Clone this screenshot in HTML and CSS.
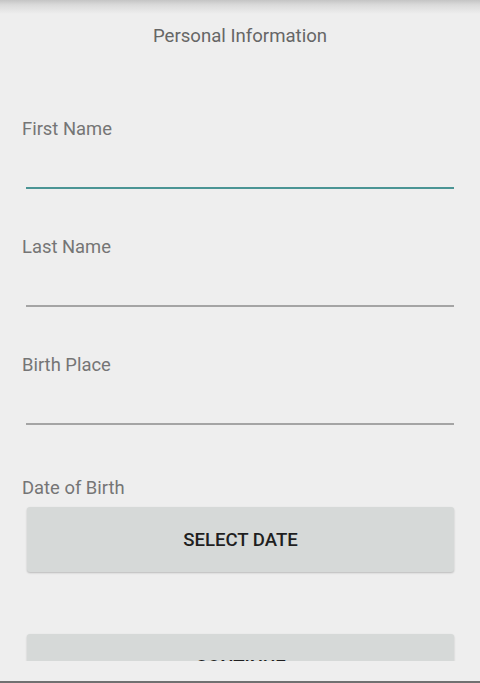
FILE: index.html
```html
<!DOCTYPE html>
<html lang="en">
<head>
<meta charset="utf-8">
<title>Personal Information</title>
<link rel="stylesheet" href="styles.css">
</head>
<body>
<div class="app">
  <div class="appbar-shadow"></div>
  <main class="scroll">
    <div class="content">
      <h1 class="title">Personal Information</h1>
      <div class="field">
        <label class="label">First Name</label>
        <div class="input focused"></div>
      </div>
      <div class="field">
        <label class="label">Last Name</label>
        <div class="input"></div>
      </div>
      <div class="field">
        <label class="label">Birth Place</label>
        <div class="input"></div>
      </div>
      <div class="date-field">
        <label class="label">Date of Birth</label>
        <button class="btn">SELECT DATE</button>
      </div>
      <button class="btn btn-continue">CONTINUE</button>
    </div>
  </main>
  <div class="footer"></div>
</div>
</body>
</html>
```

FILE: styles.css
```css
html, body {
  margin: 0;
  padding: 0;
  background: #eeeeee;
  font-family: Roboto, "Noto Sans", "Liberation Sans", sans-serif;
}

.app {
  position: relative;
  width: 480px;
  height: 683px;
  display: flex;
  flex-direction: column;
  background: #eeeeee;
}

.appbar-shadow {
  position: absolute;
  left: 0;
  top: 0;
  right: 0;
  height: 14px;
  background: linear-gradient(to bottom, #c4c4c4 0%, #dadada 35%, #eeeeee 100%);
  z-index: 2;
}

.scroll {
  height: 661px;
  overflow: hidden;
}

.content {
  display: flex;
  flex-direction: column;
  padding-top: 26px;
}

.title {
  margin: 0 0 71px;
  font-size: 18.6px;
  line-height: 21px;
  font-weight: 400;
  color: #666666;
  text-align: center;
}

.field {
  display: flex;
  flex-direction: column;
  margin-bottom: 47px;
}

.label {
  display: block;
  padding-left: 22px;
  font-size: 18.4px;
  line-height: 21px;
  color: #757575;
}

.input {
  height: 48px;
  margin: 0 26px;
  border-bottom: 2px solid #a4a4a4;
}

.input.focused {
  border-bottom-color: #4a9494;
}

.date-field {
  display: flex;
  flex-direction: column;
  margin-top: 5px;
}

.btn {
  display: block;
  height: 65px;
  margin: 9px 26px 0 27px;
  border: none;
  border-radius: 3px;
  background: #d6d9d8;
  box-shadow: 0 1px 2px rgba(0, 0, 0, 0.22);
  font-family: Roboto, "Noto Sans", "Liberation Sans", sans-serif;
  font-size: 18.6px;
  font-weight: 500;
  color: #1f1f1f;
  padding: 0;
  text-align: center;
}

.btn-continue {
  margin-top: 62px;
}

.footer {
  flex: 1;
  border-bottom: 2px solid #707070;
  background: #eeeeee;
}
```
